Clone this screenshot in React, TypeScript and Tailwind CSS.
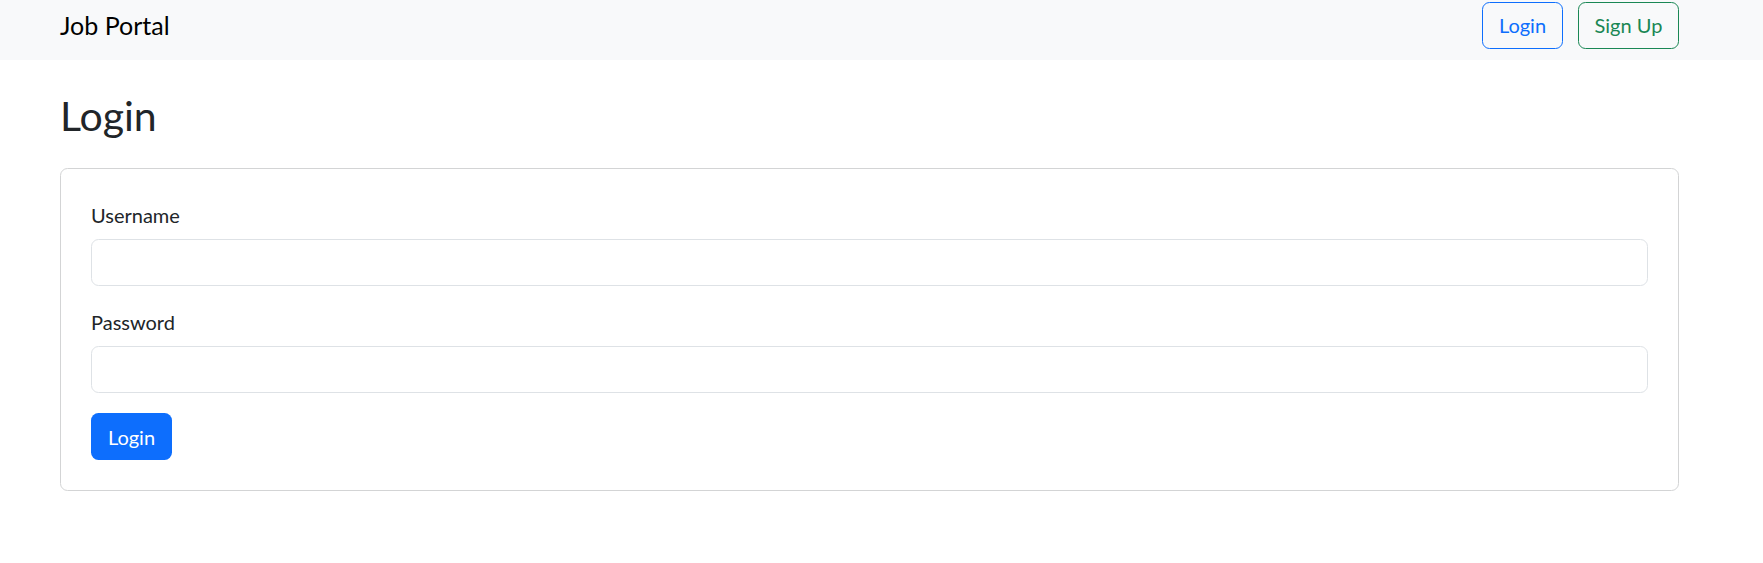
import React, { useState } from "react";

export default function App() {
  const [username, setUsername] = useState("");
  const [password, setPassword] = useState("");

  return (
    <div className="w-full min-h-[563px] bg-white text-[#212529] font-['Lato','Segoe_UI',sans-serif]">
      {/* Navbar */}
      <nav className="h-[60px] bg-[#f8f9fa]">
        <div className="ml-[60px] w-[1619px] h-[50px] flex items-center justify-between">
          <a href="#" className="text-[25px] leading-[30px] text-black">Job Portal</a>
          <div className="flex items-center gap-[15px]">
            <button className="w-[81px] h-[47px] rounded-[7.5px] border border-[#0d6efd] text-[#0d6efd] text-[20px]">
              Login
            </button>
            <button className="w-[101px] h-[47px] rounded-[7.5px] border border-[#198754] text-[#198754] text-[20px]">
              Sign Up
            </button>
          </div>
        </div>
      </nav>

      {/* Page */}
      <div className="ml-[60px] w-[1619px] pt-[32px]">
        <h2 className="text-[41px] leading-[48px] font-normal mb-[28px]">Login</h2>

        <div className="border border-[#d3d4d5] rounded-[7.5px] p-[30px]">
          <form onSubmit={(e) => e.preventDefault()}>
            <div className="mb-[20px]">
              <label className="block text-[20px] leading-[30px] pt-[1px] mb-[9px]">Username</label>
              <input
                type="text"
                value={username}
                onChange={(e) => setUsername(e.target.value)}
                className="w-full h-[47px] px-[15px] text-[20px] border border-[#dee2e6] rounded-[7.5px] outline-none"
              />
            </div>
            <div className="mb-[20px]">
              <label className="block text-[20px] leading-[30px] pt-[1px] mb-[9px]">Password</label>
              <input
                type="password"
                value={password}
                onChange={(e) => setPassword(e.target.value)}
                className="w-full h-[47px] px-[15px] text-[20px] border border-[#dee2e6] rounded-[7.5px] outline-none"
              />
            </div>
            <button type="submit" className="block w-[81px] h-[47px] rounded-[7.5px] bg-[#0d6efd] text-white text-[20px]">
              Login
            </button>
          </form>
        </div>
      </div>
    </div>
  );
}
